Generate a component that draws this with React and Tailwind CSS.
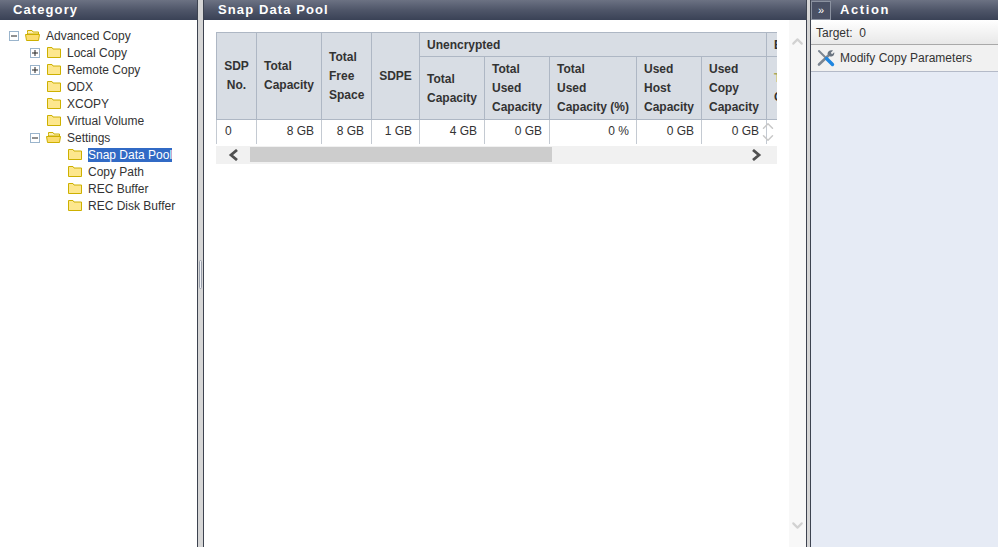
import React from 'react';
import { ChevronUp, ChevronDown } from 'lucide-react';

const treeItems = [
    { label: 'Advanced Copy', pad: 'pl-[9px]', toggle: 'minus', open: true },
    { label: 'Local Copy', pad: 'pl-[30px]', toggle: 'plus' },
    { label: 'Remote Copy', pad: 'pl-[30px]', toggle: 'plus' },
    { label: 'ODX', pad: 'pl-[30px]' },
    { label: 'XCOPY', pad: 'pl-[30px]' },
    { label: 'Virtual Volume', pad: 'pl-[30px]' },
    { label: 'Settings', pad: 'pl-[30px]', toggle: 'minus', open: true },
    { label: 'Snap Data Pool', pad: 'pl-[51px]', selected: true },
    { label: 'Copy Path', pad: 'pl-[51px]' },
    { label: 'REC Buffer', pad: 'pl-[51px]' },
    { label: 'REC Disk Buffer', pad: 'pl-[51px]' },
];

const colWidths = [40, 65, 50, 48, 65, 65, 87, 65, 65, 65];

const dataRow = ['0', '8 GB', '8 GB', '1 GB', '4 GB', '0 GB', '0 %', '0 GB', '0 GB'];

const thClass = 'border border-[#aeb7c4] bg-[#d8dde4] px-[7px] text-left align-middle font-bold text-[12px] leading-[19px] text-[#333]';

const Folder = ({ open }) => (
    <svg width="15" height="13" viewBox="0 0 15 13" className="shrink-0">
        {open ? (
            <>
                <path d="M2.5 3.5 L2.5 1.5 L7 1.5 L8 3 L13.5 3 L13.5 5 L2.5 5 Z" fill="#fdeeb0" stroke="#cdb000" />
                <path d="M0.5 5.5 L14.5 5.5 L13.5 11.5 L1.5 11.5 Z" fill="#fbdc6e" stroke="#cdb000" />
            </>
        ) : (
            <path d="M1.5 11.5 L1.5 1.5 L6 1.5 L7 3 L14.5 3 L14.5 11.5 Z" fill="#fde78e" stroke="#cdb000" />
        )}
    </svg>
);

const Toggle = ({ kind }) => (
    <svg width="10" height="10" viewBox="0 0 10 10" className="shrink-0">
        <rect x="0.5" y="0.5" width="9" height="9" fill="#fff" stroke="#9ab4cc" />
        <path d="M2 5 H8" stroke="#222" />
        {kind === 'plus' && <path d="M5 2 V8" stroke="#222" />}
    </svg>
);

const Chevron = ({ left }) => (
    <svg width="11" height="12" viewBox="0 0 11 12" className="shrink-0">
        <path d={left ? 'M9 1 L3 6 L9 11' : 'M2 1 L8 6 L2 11'} fill="none" stroke="#505050" strokeWidth="2.8" />
    </svg>
);

const PanelHeader = ({ title, className }) => (
    <div className={`flex h-5 shrink-0 items-center bg-gradient-to-b from-[#6c7283] via-[#4f5669] to-[#3a4256] text-[13px] font-bold tracking-[1.1px] text-white ${className}`}>
        {title}
    </div>
);

const Divider = ({ width, grip }) => (
    <div className={`relative h-full shrink-0 border-x border-[#3d4350] bg-[#d6d6d6] ${width}`}>
        {grip && <div className="absolute left-[1px] top-[260px] h-[29px] w-[3px] rounded-sm border border-[#9aa0ac] bg-[#eef0f4]" />}
    </div>
);

// crossed tools: grey wrench, screwdriver with blue handle
const Wrench = () => (
    <svg width="18" height="18" viewBox="0 0 18 18" className="shrink-0">
        <path d="M2 15.5 L12.5 5.5" stroke="#7c8692" strokeWidth="2.6" strokeLinecap="round" />
        <path d="M10.5 5 C10.5 2 13.5 0.5 16 1.5 L13.8 3.8 L15 5.2 L17.2 3.2 C17.8 6 15.5 8 13 7.5 Z" fill="#6a7480" />
        <path d="M2 2 L8.5 8.5" stroke="#7c8692" strokeWidth="2" strokeLinecap="round" />
        <path d="M9.5 9.5 L15.5 15.5" stroke="#1f86e0" strokeWidth="3.4" strokeLinecap="round" />
    </svg>
);

const App = () => {
    return (
        <div className="flex h-[547px] w-[998px] overflow-hidden bg-white font-['Liberation_Sans',sans-serif] text-[12px] text-[#333]">
            {/* category tree */}
            <div className="flex h-full w-[197px] shrink-0 flex-col">
                <PanelHeader title="Category" className="pl-[13px]" />
                <div className="flex flex-col pt-[7px]">
                    {treeItems.map((item) => (
                        <div key={item.label} className={`flex h-[17px] items-center ${item.pad}`}>
                            <div className="w-[16px] shrink-0">{item.toggle && <Toggle kind={item.toggle} />}</div>
                            <Folder open={item.open} />
                            <span className={`ml-[6px] h-[14px] whitespace-nowrap leading-[14px] ${item.selected ? 'bg-[#316ac5] text-white' : ''}`}>
                                {item.label}
                            </span>
                        </div>
                    ))}
                </div>
            </div>
            <Divider width="w-[7px]" grip />

            {/* main content */}
            <div className="flex h-full w-[602px] shrink-0 flex-col">
                <PanelHeader title="Snap Data Pool" className="pl-[14px]" />
                <div className="flex min-h-0 flex-1">
                    <div className="w-[585px] shrink-0 pl-[12px] pt-[12px]">
                        <div className="relative w-[561px] overflow-hidden">
                            <table className="w-[615px] table-fixed border-collapse">
                                <colgroup>
                                    {colWidths.map((w, i) => (
                                        <col key={i} style={{ width: w }} />
                                    ))}
                                </colgroup>
                                <thead>
                                    <tr className="h-[24px]">
                                        <th rowSpan={2} className={`${thClass} !text-center`}>SDP No.</th>
                                        <th rowSpan={2} className={thClass}>Total Capacity</th>
                                        <th rowSpan={2} className={thClass}>Total Free Space</th>
                                        <th rowSpan={2} className={`${thClass} !text-center`}>SDPE</th>
                                        <th colSpan={5} className={`${thClass} pt-[1px]`}>Unencrypted</th>
                                        <th className={`${thClass} pt-[1px]`}>E</th>
                                    </tr>
                                    <tr className="h-[63px]">
                                        <th className={`${thClass} pt-[1px]`}>Total Capacity</th>
                                        <th className={thClass}>Total Used Capacity</th>
                                        <th className={`${thClass} whitespace-nowrap`}>Total<br />Used<br />Capacity (%)</th>
                                        <th className={thClass}>Used Host Capacity</th>
                                        <th className={thClass}>Used Copy Capacity</th>
                                        <th className={thClass}><span className="text-[#a8a85a]">T</span><br />C</th>
                                    </tr>
                                </thead>
                                <tbody>
                                    <tr className="h-[24px]">
                                        {dataRow.map((v, i) => (
                                            <td key={i} className={`border-r border-[#c4cad2] pb-[2px] pl-[8px] pr-[7px] ${i === 0 ? 'border-l text-left' : 'text-right'}`}>
                                                {v}
                                            </td>
                                        ))}
                                        <td />
                                    </tr>
                                </tbody>
                            </table>
                            <div className="absolute left-[543px] top-[85px] flex w-[18px] flex-col items-center text-[#c8c8c8]">
                                <ChevronUp size={18} strokeWidth={2} />
                                <ChevronDown size={18} strokeWidth={2} className="-mt-[6px]" />
                            </div>
                            <div className="mt-[2px] flex h-[18px] items-center bg-[#f1f1f1]">
                                <div className="flex w-[34px] justify-center">
                                    <Chevron left />
                                </div>
                                <div className="h-[15px] w-[302px] bg-[#cdcdcd]" />
                                <div className="flex flex-1 justify-end pr-[15px]">
                                    <Chevron />
                                </div>
                            </div>
                        </div>
                    </div>
                    <div className="flex w-[17px] shrink-0 flex-col items-center justify-between bg-[#f8f8f8] pb-[13px] pt-[13px] text-[#d2d2d2]">
                        <ChevronUp size={17} strokeWidth={3} />
                        <ChevronDown size={17} strokeWidth={3} />
                    </div>
                </div>
            </div>
            <Divider width="w-[5px]" />

            {/* action panel */}
            <div className="flex h-full flex-1 flex-col bg-[#e6ebf5]">
                <PanelHeader
                    className="gap-[9px]"
                    title={
                        <>
                            <span className="flex h-[19px] w-[20px] items-center justify-center border border-[#8b92a0] bg-[#4a5165] text-[11px] font-normal tracking-normal">»</span>
                            <span className="tracking-[1.6px]">Action</span>
                        </>
                    }
                />
                <div className="flex h-[25px] items-center border-b border-[#a9a9a9] bg-gradient-to-b from-white to-[#e8e8e8] pl-[5px] pt-[2px] text-[12px]">
                    Target:&nbsp; 0
                </div>
                <div className="flex h-[27px] items-center gap-[5px] border-b border-[#b4bac8] bg-[#f1f1f1] pl-[6px]">
                    <Wrench />
                    <span>Modify Copy Parameters</span>
                </div>
            </div>
        </div>
    );
};

export default App;
